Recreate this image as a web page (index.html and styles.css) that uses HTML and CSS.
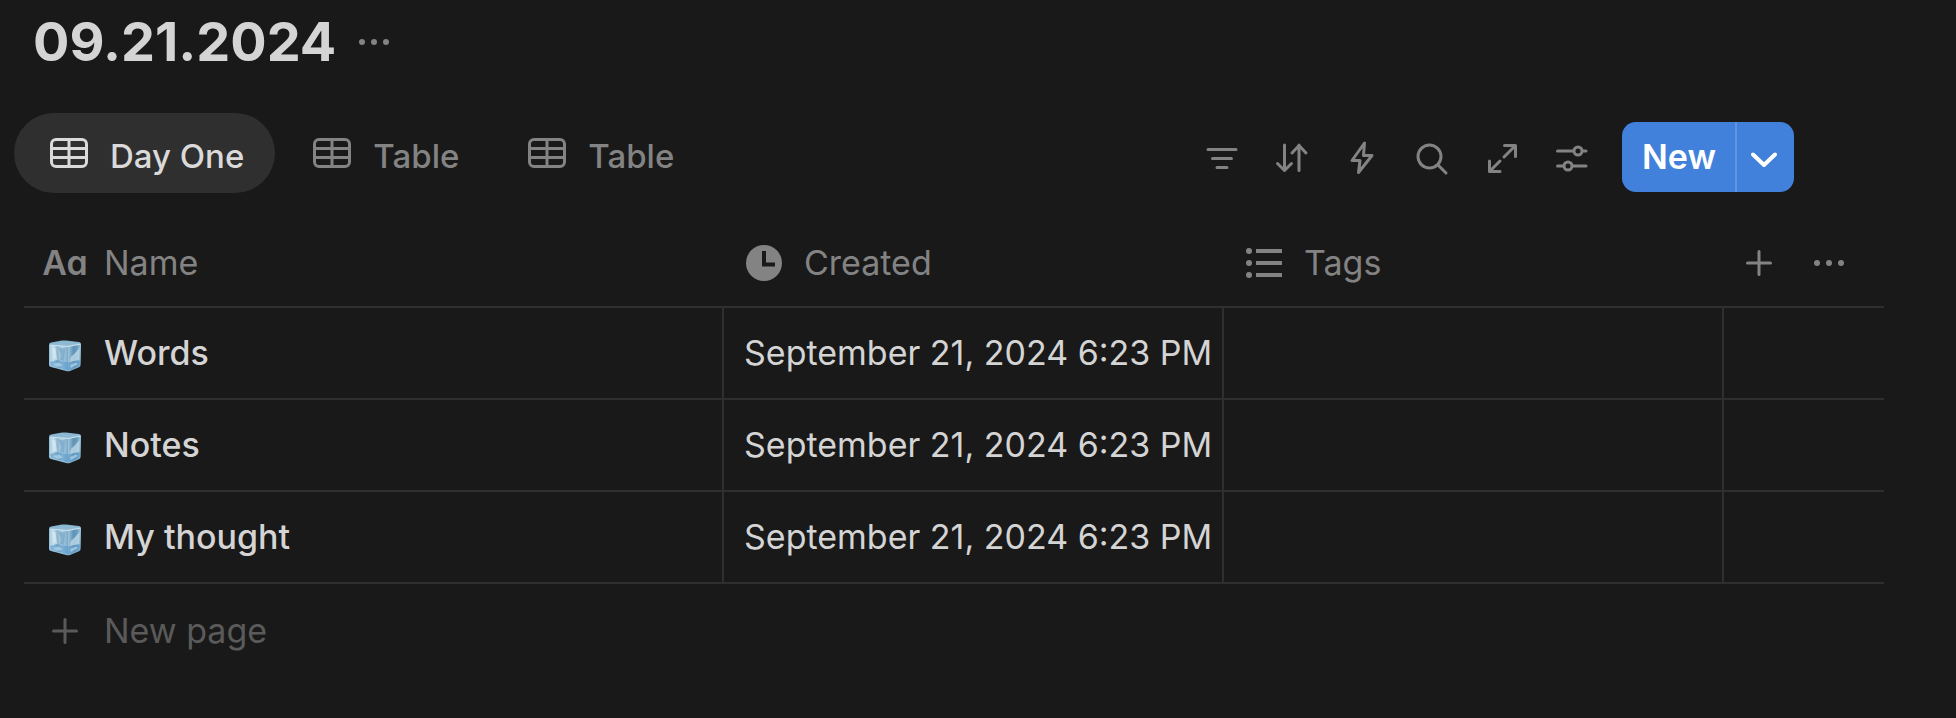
FILE: index.html
```html
<!DOCTYPE html>
<html lang="en">
<head>
<meta charset="utf-8">
<meta name="viewport" content="width=device-width, initial-scale=1">
<title>09.21.2024</title>
<link rel="stylesheet" href="styles.css">
</head>
<body>
<svg class="defs" aria-hidden="true">
  <defs>
    <linearGradient id="ice-left" x1="0" x2="1" y1="0" y2="0">
      <stop offset="0" stop-color="#a9cde2"/><stop offset=".22" stop-color="#c9e0eb"/><stop offset=".42" stop-color="#8db5d0"/><stop offset=".7" stop-color="#b2d2e4"/><stop offset="1" stop-color="#7aa8c8"/>
    </linearGradient>
    <linearGradient id="ice-right" x1="0" x2="1" y1="0" y2="0">
      <stop offset="0" stop-color="#9fc5dc"/><stop offset=".45" stop-color="#5f92b6"/><stop offset=".75" stop-color="#6d9fc0"/><stop offset="1" stop-color="#a5cbe0"/>
    </linearGradient>
    <symbol id="ice" viewBox="0 0 34 32">
      <path d="M1 5Q1 3 3 2.600L14 .6Q16 .3 18 .6L31 2Q33 2.300 33 4L32.600 25Q32.500 26.500 31 27.200L22 31Q20 31.600 18 31L3 27Q1 26.300 1 25Z" fill="#85b4d3"/>
      <path d="M1.500 5L20 6.500V30.800L3 26.500Q1.500 26 1.500 24.500Z" fill="url(#ice-left)"/>
      <path d="M20 6.500L32.600 4L32 25.500L21 30.800H20Z" fill="url(#ice-right)"/>
      <path d="M2 3.800L16 1L32 3.200L20 6.200Z" fill="#8fb9d2"/>
      <path d="M2 5L20 6.500L32.300 4" fill="none" stroke="#cfe5ef" stroke-width="1.200"/>
      <path d="M4 8L6 19L9 20L7.500 8.500Z" fill="#dcecf2" opacity=".7"/>
      <path d="M11 8L13 15L12 20L16 21L17 8.500Z" fill="#6d9fc3" opacity=".65"/>
      <path d="M23 17L28 12L31.500 8L31 20L22 22Z" fill="#d2e7ef" opacity=".65"/>
      <path d="M2 22L9 20L20 22.500L32 20.500L32 25L21 30.500L3 26Z" fill="#5e9ccb" opacity=".65"/>
      <path d="M5 24L11 22.500L15 25.500L9 27ZM22 25L28 22.500L30 24L23 28Z" fill="#b9d9e8" opacity=".65"/>
    </symbol>
    <symbol id="grid" viewBox="0 0 38 30">
      <rect x="1.500" y="1.500" width="35" height="27" rx="4.500"/>
      <path d="M19 1.500V28.500M1.500 10.500H36.500M1.500 19.500H36.500"/>
    </symbol>
    <symbol id="dots" viewBox="0 0 30 6">
      <circle cx="3" cy="3" r="3"/><circle cx="15" cy="3" r="3"/><circle cx="27" cy="3" r="3"/>
    </symbol>
    <symbol id="plus" viewBox="0 0 26 26"><path d="M13 1.500V24.500M1.500 13H24.500"/></symbol>
  </defs>
</svg>

<header class="title-bar">
  <h1 class="title">09.21.2024</h1>
  <button class="more" type="button" aria-label="More"><svg class="dots"><use href="#dots"/></svg></button>
</header>

<div class="view-bar">
  <nav class="tabs" aria-label="Views">
    <button class="tab tab-active" type="button"><svg class="grid-icon"><use href="#grid"/></svg><span class="tab-label">Day One</span></button>
    <button class="tab" type="button"><svg class="grid-icon"><use href="#grid"/></svg><span class="tab-label">Table</span></button>
    <button class="tab" type="button"><svg class="grid-icon"><use href="#grid"/></svg><span class="tab-label">Table</span></button>
  </nav>
  <div class="tools">
    <button class="tool" type="button" aria-label="Filter"><svg class="icon" viewBox="0 0 36 36"><path d="M4 8.500H32M8.500 17.500H27.500M13 26.500H23"/></svg></button>
    <button class="tool" type="button" aria-label="Sort"><svg class="icon" viewBox="0 0 36 36"><path d="M10.500 4V29.500M3.500 22.500L10.500 29.500L17.500 22.500M25 29.500V4M18 12L25 4.500L32 12"/></svg></button>
    <button class="tool" type="button" aria-label="Automations"><svg class="icon" viewBox="0 0 36 36"><path d="M20.500 2L8 19.500H16L14.500 31.500L28 14.500H19.500Z"/></svg></button>
    <button class="tool" type="button" aria-label="Search"><svg class="icon" viewBox="0 0 36 36"><circle cx="15.500" cy="15.500" r="11.500"/><path d="M24 24L32 32"/></svg></button>
    <button class="tool" type="button" aria-label="Expand"><svg class="icon" viewBox="0 0 36 36"><path d="M20 16L31 5M20.500 4.500H31.500V15.500M16 20L5.500 30.500M5.500 20V30.500H16"/></svg></button>
    <button class="tool" type="button" aria-label="View settings"><svg class="icon" viewBox="0 0 36 36"><path d="M3.500 10H19.500M28.500 10H32M3.500 25H9.500M18.500 25H32"/><circle cx="24" cy="10" r="4"/><circle cx="14" cy="25" r="4"/></svg></button>
    <div class="new">
      <button class="new-main" type="button">New</button>
      <button class="new-menu" type="button" aria-label="New options"><svg class="chevron" viewBox="0 0 26 16"><path d="M2 2.500L13 13L24 2.500"/></svg></button>
    </div>
  </div>
</div>

<table class="db">
  <colgroup><col class="col-name"><col class="col-prop"><col class="col-prop"><col></colgroup>
  <thead>
    <tr>
      <th scope="col"><div class="cell cell-name"><span class="lead lead-aa" aria-hidden="true">Aa</span>Name</div></th>
      <th scope="col"><div class="cell cell-head"><svg class="prop-icon" viewBox="0 0 36 36"><circle cx="18" cy="18" r="18" fill="currentColor"/><path d="M18 6V19.500H29" fill="none" stroke="#191919" stroke-width="4"/></svg>Created</div></th>
      <th scope="col"><div class="cell cell-head"><svg class="prop-icon" viewBox="0 0 36 36" fill="currentColor"><circle cx="3" cy="6" r="3"/><circle cx="3" cy="18" r="3"/><circle cx="3" cy="30" r="3"/><path d="M10 4H36V8H10ZM10 16H36V20H10ZM10 28H36V32H10Z"/></svg>Tags</div></th>
      <th><div class="cell"><button class="tool" type="button" aria-label="Add property"><svg class="plus"><use href="#plus"/></svg></button><button class="tool" type="button" aria-label="Table options"><svg class="dots"><use href="#dots"/></svg></button></div></th>
    </tr>
  </thead>
  <tbody>
    <tr><td><a class="cell cell-name page" href="#words"><span class="lead"><svg class="ice"><use href="#ice"/></svg></span>Words</a></td><td><div class="cell cell-prop">September 21, 2024 6:23 PM</div></td><td></td><td></td></tr>
    <tr><td><a class="cell cell-name page" href="#notes"><span class="lead"><svg class="ice"><use href="#ice"/></svg></span>Notes</a></td><td><div class="cell cell-prop">September 21, 2024 6:23 PM</div></td><td></td><td></td></tr>
    <tr><td><a class="cell cell-name page" href="#my-thought"><span class="lead"><svg class="ice"><use href="#ice"/></svg></span>My thought</a></td><td><div class="cell cell-prop">September 21, 2024 6:23 PM</div></td><td></td><td></td></tr>
  </tbody>
</table>
<button class="cell cell-name new-page" type="button"><span class="lead"><svg class="plus"><use href="#plus"/></svg></span>New page</button>
</body>
</html>
```
FILE: styles.css
```css
* { box-sizing: border-box; }

body {
  margin: 0;
  background: #191919;
  color: #d4d4d4;
  font: 400 34px/40px Inter, "Liberation Sans", sans-serif;
}

button {
  margin: 0;
  padding: 0;
  border: 0;
  background: none;
  color: inherit;
  font: inherit;
  cursor: pointer;
}

svg {
  display: block;
  flex: none;
}

.defs {
  position: absolute;
  width: 0;
  height: 0;
}

.title-bar {
  display: flex;
  align-items: center;
  gap: 23px;
  height: 84px;
  padding-left: 33px;
}

.title {
  margin: 0;
  font-size: 54px;
  font-weight: 700;
  line-height: 64px;
}

.more { color: #838383; }

.dots {
  width: 30px;
  height: 6px;
  fill: currentColor;
}

.view-bar {
  display: flex;
  align-items: center;
  justify-content: space-between;
  margin: 29px 162px 24px 14px;
}

.tabs {
  display: flex;
  gap: 2px;
}

.tab {
  display: flex;
  align-items: center;
  gap: 22px;
  height: 80px;
  padding: 0 31px 0 36px;
  border-radius: 40px;
  color: #838383;
  font-size: 33px;
  font-weight: 500;
  white-space: nowrap;
}

.tab-active {
  background: #2f2f2f;
  color: #dadada;
}

.tab-label { padding-top: 5px; }

.grid-icon {
  width: 38px;
  height: 30px;
  fill: none;
  stroke: currentColor;
  stroke-width: 3px;
}

.tools {
  display: flex;
  align-items: center;
  padding-top: 8px;
}

.tool {
  display: flex;
  align-items: center;
  justify-content: center;
  width: 70px;
  height: 70px;
  color: #838383;
}

.icon {
  width: 36px;
  height: 36px;
  margin-top: 3px;
  fill: none;
  stroke: currentColor;
  stroke-width: 3px;
  stroke-linecap: round;
  stroke-linejoin: round;
}

.new {
  display: flex;
  height: 70px;
  margin-left: 15px;
  border-radius: 14px;
  overflow: hidden;
  background: #4281db;
  color: #fff;
}

.new-main {
  padding: 0 19px 0 20px;
  border-right: 2px solid #5f95e0;
  font-weight: 600;
}

.new-menu {
  display: flex;
  align-items: center;
  justify-content: center;
  width: 57px;
  padding: 5px 3px 0 0;
}

.chevron {
  width: 26px;
  height: 16px;
  fill: none;
  stroke: currentColor;
  stroke-width: 4px;
  stroke-linecap: round;
  stroke-linejoin: round;
}

.db {
  width: calc(100% - 96px);
  margin: 0 72px 0 24px;
  table-layout: fixed;
  border-spacing: 0;
}

.col-name { width: 700px; }
.col-prop { width: 500px; }

.db th,
.db td {
  height: 92px;
  padding: 0;
  border-bottom: 2px solid #2f2f2f;
  text-align: left;
  font-weight: 400;
  white-space: nowrap;
}

.db th {
  height: 91px;
  padding-top: 2px;
  color: #838383;
}

.db td:not(:last-child) { border-right: 2px solid #2f2f2f; }

.cell {
  display: flex;
  align-items: center;
}

.cell-name {
  gap: 17px;
  padding-left: 19px;
}

.cell-prop { padding-left: 20px; }

.cell-head {
  gap: 22px;
  padding-left: 22px;
}

.page {
  color: inherit;
  font-weight: 500;
  text-decoration: none;
}

.lead {
  display: flex;
  justify-content: center;
  width: 44px;
}

.lead-aa {
  font-weight: 600;
  font-feature-settings: "cv11";
}

.ice {
  width: 34px;
  height: 32px;
  margin-top: 5px;
}

.prop-icon {
  width: 36px;
  height: 36px;
}

.plus {
  width: 26px;
  height: 26px;
  fill: none;
  stroke: currentColor;
  stroke-width: 3px;
  stroke-linecap: round;
}

.new-page {
  height: 94px;
  margin-left: 24px;
  color: #5a5a5a;
}
```
